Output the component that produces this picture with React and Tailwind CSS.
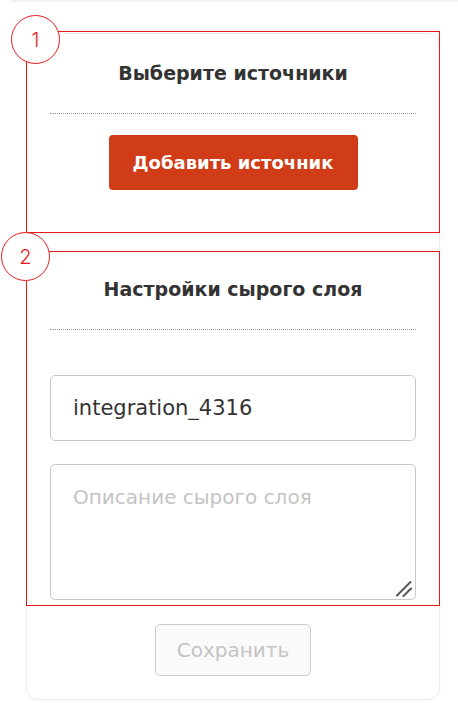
import React from "react";

function StepBadge({ n, className }) {
  return (
    <div
      className={[
        "absolute flex h-[49px] w-[49px] items-center justify-center rounded-full border border-[#e31b1b] bg-white font-['Inter',sans-serif] text-[20px] font-light text-[#e31b1b]",
        className,
      ].join(" ")}
    >
      {n}
    </div>
  );
}

export default function App() {
  return (
    <div className="min-h-[711px] bg-white font-['DejaVu_Sans','Noto_Sans',sans-serif] text-[#333]">
      <div className="ml-[10px] h-[2px] bg-[#f2f2f2]" />

      <div className="ml-[26px] mt-[31px] flex h-[667px] w-[414px] flex-col rounded-[12px] border border-[#ececec] shadow-[0_1px_3px_rgba(0,0,0,0.04)]">
        {/* step 1 */}
        <section className="relative -ml-px -mt-[3px] flex h-[202px] w-[414px] flex-col items-center border border-[#e31b1b] px-[23px]">
          <StepBadge n="1" className="-left-[16px] -top-[17px]" />
          <h2 className="mt-[29px] text-[19px] font-bold leading-[24px] text-[#333]">
            Выберите источники
          </h2>
          <div className="mt-[28px] w-full border-t border-dotted border-[#9a9a9a]" />
          <button className="mt-[21px] h-[55px] w-[249px] rounded-[4px] bg-[#cf3c17] text-[18px] font-bold text-white">
            Добавить источник
          </button>
        </section>

        {/* step 2 */}
        <section className="relative -ml-px mt-[18px] flex h-[355px] w-[414px] flex-col items-center border border-[#e31b1b] px-[23px]">
          <StepBadge n="2" className="-left-[26px] -top-[20px]" />
          <h2 className="mt-[25px] text-[19px] font-bold leading-[24px] text-[#333]">
            Настройки сырого слоя
          </h2>
          <div className="mt-[28px] w-full border-t border-dotted border-[#9a9a9a]" />
          <input
            readOnly
            value="integration_4316"
            className="mt-[45px] h-[66px] w-full shrink-0 rounded-[5px] border border-[#c9c9c9] px-[22px] text-[21px] text-[#333] outline-none"
          />
          <div className="relative mt-[23px] w-full">
            <textarea
              placeholder="Описание сырого слоя"
              className="block h-[136px] w-full resize-none rounded-[5px] border border-[#c9c9c9] px-[22px] py-[18px] text-[20px] leading-[28px] text-[#333] outline-none placeholder:text-[#c4c4c4]"
            />
            <svg
              className="pointer-events-none absolute bottom-[3px] right-[3px]"
              width="18"
              height="17"
              viewBox="0 0 18 17"
              fill="none"
              stroke="#555"
              strokeWidth="2"
              strokeLinecap="round"
            >
              <path d="M2 15.5 L15.5 2" />
              <path d="M8.5 16 L16 8.5" />
            </svg>
          </div>
        </section>

        <div className="mt-[18px] flex justify-center">
          <button
            disabled
            className="h-[52px] w-[156px] rounded-[5px] border border-[#cccccc] bg-[#fafafa] text-[20px] text-[#c4c4c4]"
          >
            Сохранить
          </button>
        </div>
      </div>
    </div>
  );
}
